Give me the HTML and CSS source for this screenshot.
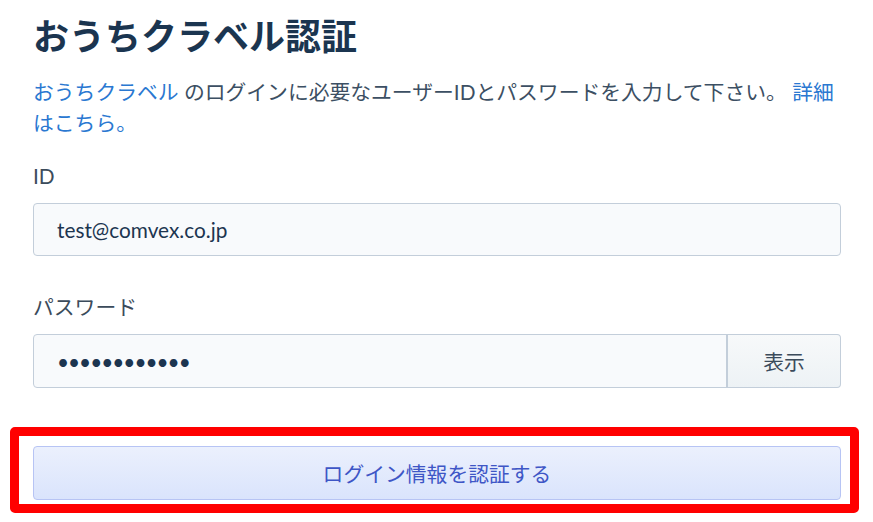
FILE: index.html
```html
<!DOCTYPE html>
<html lang="ja">
<head>
<meta charset="utf-8">
<title>おうちクラベル認証</title>
<link rel="stylesheet" href="styles.css">
</head>
<body>
<main class="page">
  <h1 class="title">おうちクラベル認証</h1>
  <p class="desc"><a class="link" href="#">おうちクラベル</a> のログインに必要なユーザーIDとパスワードを入力して下さい。 <a class="link" href="#">詳細</a><a class="link" href="#">はこちら。</a></p>
  <div class="field">
    <label class="label" for="uid">ID</label>
    <input class="input" id="uid" type="text" value="test@comvex.co.jp">
  </div>
  <div class="field">
    <label class="label" for="pw">パスワード</label>
    <div class="pw-group">
      <input class="input pw-input" id="pw" type="password" value="abcdefghijkl">
      <button class="show-btn" type="button">表示</button>
    </div>
  </div>
  <div class="submit-wrap">
    <button class="submit-btn" type="submit">ログイン情報を認証する</button>
    <div class="highlight"></div>
  </div>
</main>
</body>
</html>
```

FILE: styles.css
```css
* { box-sizing: border-box; }
html, body { margin: 0; padding: 0; background: #ffffff; }
body {
  font-family: Lato, "Noto Sans CJK JP", sans-serif;
  font-size: 20.8px;
  color: #3b4b5b;
}
.page {
  min-height: 522px;
  padding: 9px 32px 40px 33px;
}
.title {
  margin: 0;
  font-size: 36px;
  font-weight: 700;
  line-height: 54px;
  color: #1b3550;
}
.desc {
  margin: 13px 0 0;
  line-height: 31.2px;
  color: #3c4f63;
}
.link { color: #2a78d1; text-decoration: none; }
.field { margin-top: 22px; }
.field + .field { margin-top: 35px; }
.label {
  display: block;
  line-height: 31px;
  margin-bottom: 12px;
  color: #3b4b5b;
}
.input {
  display: block;
  width: 100%;
  height: 53px;
  padding: 0 23px;
  border: 1px solid #c3ceda;
  border-radius: 4px;
  background: #f8fafc;
  font-family: Lato, "Noto Sans CJK JP", sans-serif;
  font-size: 20.8px;
  color: #1c3550;
  outline: none;
}
.pw-group { display: flex; height: 54px; }
.pw-input {
  flex: 1;
  width: auto;
  height: 54px;
  border-radius: 4px 0 0 4px;
  letter-spacing: -1px;
}
.show-btn {
  width: 115px;
  height: 54px;
  border: 1px solid #c3ceda;
  border-left-width: 2px;
  border-radius: 0 4px 4px 0;
  margin-left: -1px;
  background: linear-gradient(#f7f9fa, #edf2f5);
  font-family: Lato, "Noto Sans CJK JP", sans-serif;
  font-size: 20.8px;
  color: #3b4b5b;
}
.submit-wrap {
  position: relative;
  margin-top: 58px;
}
.submit-btn {
  display: block;
  width: 100%;
  height: 54px;
  border: 1px solid #b7c4f4;
  border-radius: 4px;
  background: linear-gradient(#ebf0fd, #dae4fc);
  font-family: Lato, "Noto Sans CJK JP", sans-serif;
  font-size: 20.8px;
  color: #3e56c6;
}
.highlight {
  position: absolute;
  top: -19px;
  left: -23px;
  right: -18px;
  bottom: -13px;
  border: 9px solid #ff0000;
  border-radius: 5px;
  pointer-events: none;
}
```
